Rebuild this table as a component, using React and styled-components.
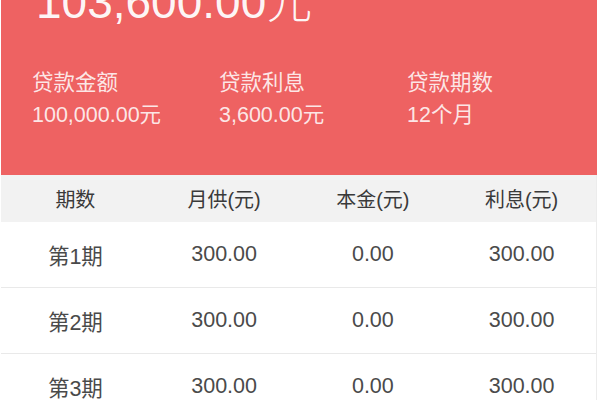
import React from 'react';
import styled, { createGlobalStyle } from 'styled-components';

const GlobalStyle = createGlobalStyle`
  html, body {
    margin: 0;
    padding: 0;
    background: #fff;
    overflow: hidden;
  }
  body {
    font-family: "Liberation Sans", "Noto Sans CJK SC", sans-serif;
  }
`;

const summary = [
  { label: '贷款金额', value: '100,000.00元' },
  { label: '贷款利息', value: '3,600.00元' },
  { label: '贷款期数', value: '12个月' },
];

const rows = [
  { term: '第1期', monthly: '300.00', principal: '0.00', interest: '300.00' },
  { term: '第2期', monthly: '300.00', principal: '0.00', interest: '300.00' },
  { term: '第3期', monthly: '300.00', principal: '0.00', interest: '300.00' },
];

const App = () => {
  return (
    <Page>
      <GlobalStyle />
      <Hero>
        <Amount>103,600.00元</Amount>
        <Stats>
          {summary.map((s) => (
            <Stat key={s.label}>
              <StatLabel>{s.label}</StatLabel>
              <StatValue>{s.value}</StatValue>
            </Stat>
          ))}
        </Stats>
      </Hero>
      <Table>
        <HeadRow>
          <Cell>期数</Cell>
          <Cell>月供(元)</Cell>
          <Cell>本金(元)</Cell>
          <Cell>利息(元)</Cell>
        </HeadRow>
        {rows.map((r) => (
          <BodyRow key={r.term}>
            <Cell>{r.term}</Cell>
            <Cell>{r.monthly}</Cell>
            <Cell>{r.principal}</Cell>
            <Cell>{r.interest}</Cell>
          </BodyRow>
        ))}
      </Table>
    </Page>
  );
};

export default App;

const Page = styled.div`
  width: 600px;
  height: 400px;
  overflow: hidden;
  padding: 0 3px 0 1px;
  box-sizing: border-box;
`;

const Hero = styled.div`
  height: 175px;
  background: #ee6262;
  color: #fff;
  padding-left: 31px;
  box-sizing: border-box;
  overflow: hidden;
`;

const Amount = styled.div`
  margin-top: -21px;
  margin-left: 4px;
  height: 46px;
  line-height: 46px;
  font-size: 46px;
  font-weight: 300;
  color: rgba(255, 255, 255, 0.94);
  white-space: nowrap;
`;

const Stats = styled.div`
  display: grid;
  grid-template-columns: 187px 188px 188px;
  margin-top: 46px;
`;

const Stat = styled.div`
  display: flex;
  flex-direction: column;
  gap: 8px;
`;

const StatLabel = styled.div`
  font-size: 21.5px;
  line-height: 24px;
  color: rgba(255, 255, 255, 0.86);
`;

const StatValue = styled.div`
  font-size: 21.5px;
  line-height: 24px;
  color: rgba(255, 255, 255, 0.86);
`;

const Table = styled.div`
  display: flex;
  flex-direction: column;
  border-right: 1px solid #ececec;
`;

const HeadRow = styled.div`
  display: grid;
  grid-template-columns: repeat(4, 1fr);
  align-items: center;
  height: 47px;
  background: #f2f2f2;
  font-size: 20px;
  color: #3a3a3a;
`;

const BodyRow = styled.div`
  display: grid;
  grid-template-columns: repeat(4, 1fr);
  align-items: center;
  height: 65px;
  background: #fff;
  border-bottom: 1px solid #e9e9e9;
  font-size: 21.5px;
  color: #4a4a4a;
`;

const Cell = styled.div`
  text-align: center;
  white-space: nowrap;
`;
